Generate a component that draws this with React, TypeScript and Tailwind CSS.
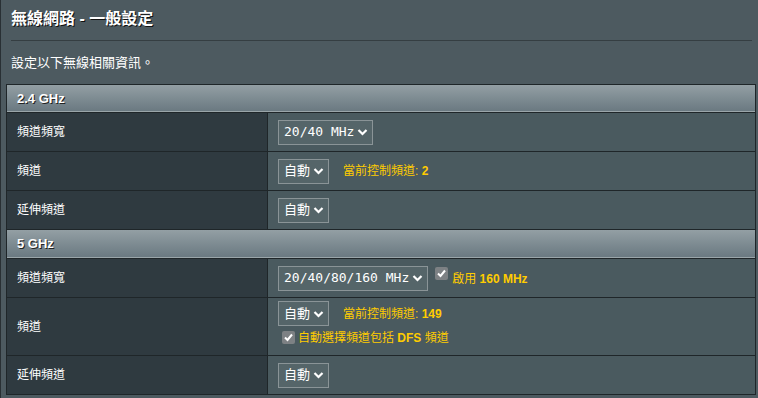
import type { ReactNode } from "react";

const FONT = {
  fontFamily: '"Liberation Sans", "Noto Sans CJK TC", sans-serif',
};
const MONO = {
  fontFamily: '"DejaVu Sans Mono", "Noto Sans CJK TC", monospace',
};

function Chevron() {
  return (
    <svg width="11" height="8" viewBox="0 0 11 8" className="shrink-0">
      <polyline
        points="1.5,2 5.5,6 9.5,2"
        fill="none"
        stroke="#ffffff"
        strokeWidth="2.2"
      />
    </svg>
  );
}

function Select({ value, mono = false }: { value: string; mono?: boolean }) {
  return (
    <div className="flex h-[25px] items-center gap-[3px] border border-[#8a9497] bg-[#556569] pl-[5px] pr-[4px] text-white">
      <span className="text-[13px]" style={mono ? MONO : FONT}>
        {value}
      </span>
      <Chevron />
    </div>
  );
}

function Checkbox({ className = "" }: { className?: string }) {
  return (
    <span
      className={`flex size-[13px] shrink-0 items-center justify-center rounded-[2px] bg-[#7d8184] ${className}`}
    >
      <svg width="11" height="11" viewBox="0 0 11 11">
        <polyline
          points="2,5.5 4.5,8 9,2.5"
          fill="none"
          stroke="#ffffff"
          strokeWidth="2"
        />
      </svg>
    </span>
  );
}

function Note({ children }: { children: ReactNode }) {
  return <span className="text-[12px] text-[#ffcc00]">{children}</span>;
}

function Header({ title, h }: { title: string; h: string }) {
  return (
    <div
      className={`flex ${h} items-center border-b border-[#1f2629] bg-gradient-to-b from-[#939fa4] to-[#697880] pl-[10px] shadow-[inset_0_-1px_0_#9aa5a9]`}
    >
      <span className="text-[13px] font-bold text-white [text-shadow:1px_1px_0_#222]">
        {title}
      </span>
    </div>
  );
}

function Row({
  label,
  h,
  children,
  top = false,
}: {
  label: string;
  h: string;
  children: ReactNode;
  top?: boolean;
}) {
  return (
    <div className={`flex ${h} border-b border-[#1f2629]`}>
      <div className="flex w-[261px] shrink-0 items-center border-r border-[#1f2629] bg-[#2f3a40] pl-[10px] text-[12px] text-white">
        {label}
      </div>
      <div
        className={`flex flex-1 bg-[#4a5a5f] pl-[10px] ${
          top ? "flex-col items-start pt-[3px]" : "items-center"
        }`}
      >
        {children}
      </div>
    </div>
  );
}

export default function App() {
  return (
    <div
      className="h-[398px] w-[758px] overflow-hidden border-l border-[#293034] bg-[#4d5a60]"
      style={FONT}
    >
      <div className="flex h-[40px] items-center pl-[10px] pb-[2px]">
        <h1 className="text-[16px] font-bold text-white [text-shadow:1px_1px_0_#111]">
          無線網路 - 一般設定
        </h1>
      </div>
      <div className="ml-[10px] mr-[6px] h-px bg-[#353e42]" />
      <div className="flex h-[43px] items-center pl-[10px] text-[13px] text-white">
        設定以下無線相關資訊。
      </div>

      <div className="ml-[5px] w-[750px] border-x border-t border-[#1f2629]">
        <Header title="2.4 GHz" h="h-[28px]" />
        <Row label="頻道頻寬" h="h-[39px]">
          <Select value="20/40 MHz" mono />
        </Row>
        <Row label="頻道" h="h-[39px]">
          <div className="flex items-center gap-[14px]">
            <Select value="自動" />
            <Note>
              當前控制頻道: <span className="font-bold">2</span>
            </Note>
          </div>
        </Row>
        <Row label="延伸頻道" h="h-[39px]">
          <Select value="自動" />
        </Row>

        <Header title="5 GHz" h="h-[29px]" />
        <Row label="頻道頻寬" h="h-[39px]">
          <div className="flex items-center">
            <Select value="20/40/80/160 MHz" mono />
            <Checkbox className="mb-[9px] ml-[7px]" />
            <span className="ml-[4px]">
              <Note>
                啟用 <span className="font-bold">160 MHz</span>
              </Note>
            </span>
          </div>
        </Row>
        <Row label="頻道" h="h-[58px]" top>
          <div className="flex items-center gap-[14px]">
            <Select value="自動" />
            <Note>
              當前控制頻道: <span className="font-bold">149</span>
            </Note>
          </div>
          <div className="ml-[4px] mt-[3px] flex items-center gap-[3px]">
            <Checkbox className="mb-[2px]" />
            <Note>
              自動選擇頻道包括 <span className="font-bold">DFS</span> 頻道
            </Note>
          </div>
        </Row>
        <Row label="延伸頻道" h="h-[39px]">
          <Select value="自動" />
        </Row>
      </div>
    </div>
  );
}
